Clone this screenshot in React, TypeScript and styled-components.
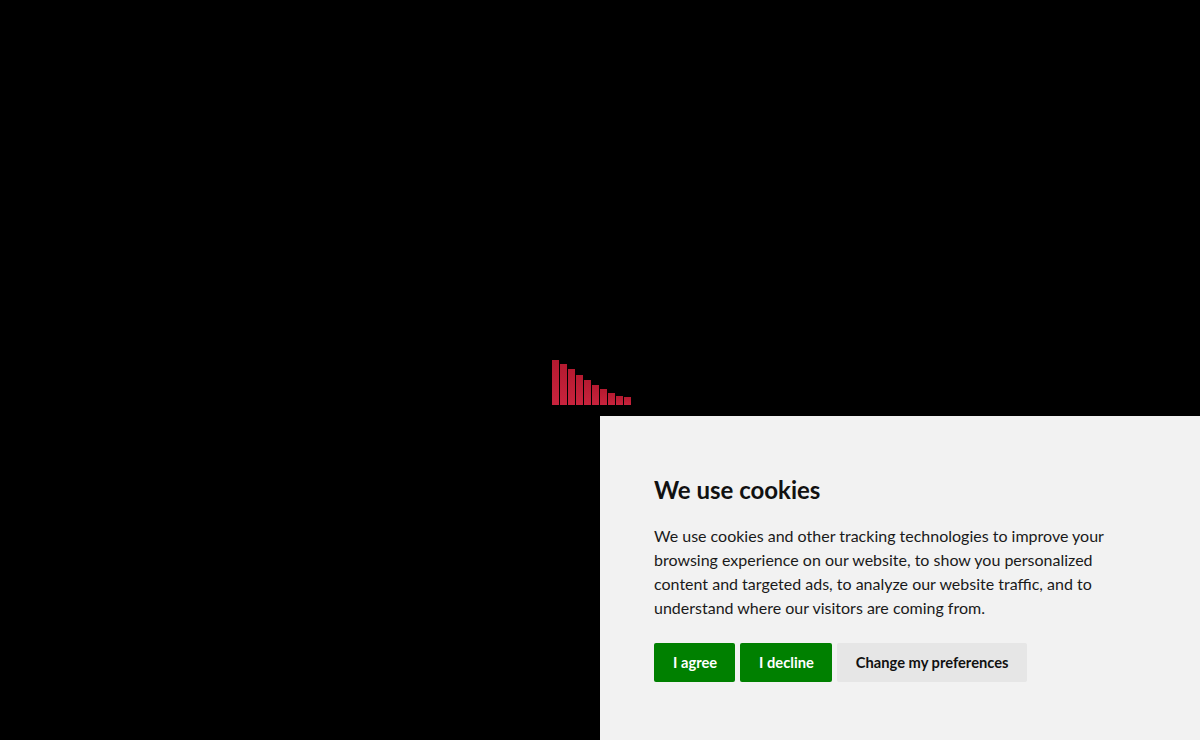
import { FC } from 'react'
import styled, { createGlobalStyle } from 'styled-components'

const GlobalStyle = createGlobalStyle`
  html, body {
    margin: 0;
    padding: 0;
    background: #000;
  }
  body {
    font-family: Lato, 'Noto Sans', 'Liberation Sans', sans-serif;
  }
`

const barHeights = [45, 41, 36, 30, 25, 20, 16, 12, 9, 8]

const Loader: FC = () => (
  <Bars>
    {barHeights.map((h, i) => (
      <Bar key={i} style={{ height: h }} />
    ))}
  </Bars>
)

export default function App() {
  return (
    <>
      <GlobalStyle />
      <Stage>
        <Loader />
      </Stage>
      <CookiePanel role='dialog' aria-label='Cookie consent'>
        <Heading>We use cookies</Heading>
        <Body>
          We use cookies and other tracking technologies to improve your browsing experience on our
          website, to show you personalized content and targeted ads, to analyze our website traffic,
          and to understand where our visitors are coming from.
        </Body>
        <Actions>
          <Button $variant='primary'>I agree</Button>
          <Button $variant='primary'>I decline</Button>
          <Button $variant='secondary'>Change my preferences</Button>
        </Actions>
      </CookiePanel>
    </>
  )
}

const Stage = styled.main`
  height: 740px;
  box-sizing: border-box;
  padding: 360px 0 0 552px;
  background: #000;
`

const Bars = styled.div`
  display: flex;
  align-items: flex-end;
  gap: 1px;
  height: 45px;
`

const Bar = styled.span`
  display: block;
  width: 7px;
  background: linear-gradient(180deg, #b51a30 0%, #c8233d 100%);
`

const CookiePanel = styled.section`
  position: fixed;
  right: 0;
  bottom: 0;
  width: 600px;
  height: 324px;
  box-sizing: border-box;
  padding: 59px 54px 0 54px;
  background: #f2f2f2;
  color: #111;
`

const Heading = styled.h2`
  margin: 0 0 19px;
  font-size: 24px;
  line-height: 30px;
  font-weight: 700;
  color: #111;
`

const Body = styled.p`
  margin: 0;
  width: 470px;
  font-size: 16px;
  line-height: 24px;
  color: #1a1a1a;
`

const Actions = styled.div`
  display: flex;
  gap: 5px;
  margin-top: 23px;
`

const Button = styled.button<{ $variant: 'primary' | 'secondary' }>`
  border: none;
  border-radius: 2px;
  padding: 11px 18px 11px 19px;
  height: 39px;
  font-family: inherit;
  font-size: 14.7px;
  line-height: 17px;
  font-weight: 700;
  cursor: pointer;
  background: ${p => (p.$variant === 'primary' ? '#008000' : '#e6e6e6')};
  color: ${p => (p.$variant === 'primary' ? '#fff' : '#111')};
`
